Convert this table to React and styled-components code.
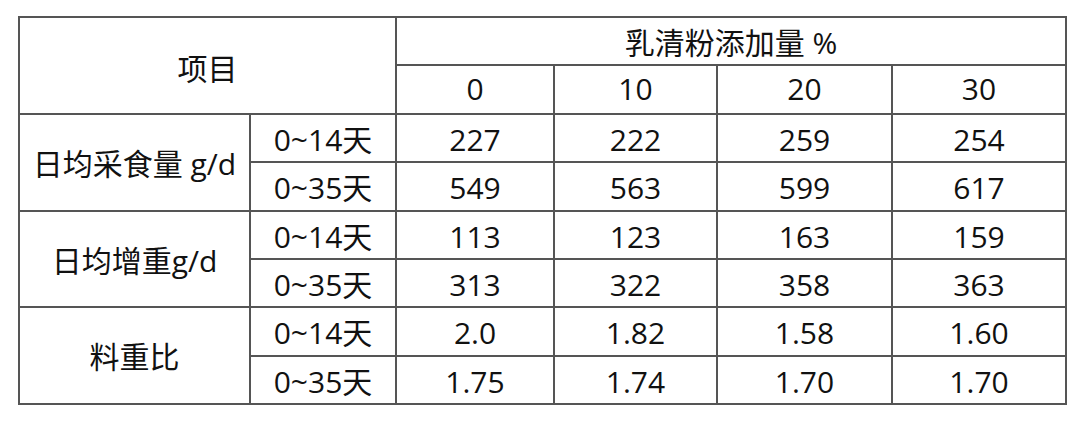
import React from 'react';
import styled, { createGlobalStyle } from 'styled-components';

const GlobalStyle = createGlobalStyle`
  body {
    margin: 0;
    background: #fff;
    font-family: "Open Sans", "Noto Sans CJK SC", sans-serif;
  }
`;

const columns = [231, 146, 158, 163, 175, 174];
const doses = ['0', '10', '20', '30'];

const groups = [
  {
    label: '日均采食量 g/d',
    rows: [
      { period: '0~14天', values: ['227', '222', '259', '254'] },
      { period: '0~35天', values: ['549', '563', '599', '617'] },
    ],
  },
  {
    label: '日均增重g/d',
    rows: [
      { period: '0~14天', values: ['113', '123', '163', '159'] },
      { period: '0~35天', values: ['313', '322', '358', '363'] },
    ],
  },
  {
    label: '料重比',
    rows: [
      { period: '0~14天', values: ['2.0', '1.82', '1.58', '1.60'] },
      { period: '0~35天', values: ['1.75', '1.74', '1.70', '1.70'] },
    ],
  },
];

const Page = styled.div`
  padding: 16px 0 0 18px;
`;

const Table = styled.table`
  border-collapse: collapse;
  table-layout: fixed;
  width: 1048px;
  color: #111;
  font-size: 30px;
`;

const Col = styled.col`
  width: ${(p) => p.$w}px;
`;

const Row = styled.tr`
  height: 48.4px;
`;

const Cell = styled.td`
  border: 2px solid #555;
  padding: 4px 0 0;
  text-align: center;
  vertical-align: middle;
  line-height: 1.15;
  white-space: nowrap;
`;

const HeadCell = styled(Cell).attrs({ as: 'th' })`
  font-weight: normal;
  padding-top: ${(p) => p.$pad}px;
`;

export default function App() {
  return (
    <Page>
      <GlobalStyle />
      <Table>
        <colgroup>
          {columns.map((w, i) => (
            <Col key={i} $w={w} />
          ))}
        </colgroup>
        <thead>
          <Row>
            <HeadCell rowSpan={2} colSpan={2} $pad={8}>
              项目
            </HeadCell>
            <HeadCell colSpan={4} $pad={4}>乳清粉添加量 %</HeadCell>
          </Row>
          <Row>
            {doses.map((d) => (
              <HeadCell key={d} $pad={0}>{d}</HeadCell>
            ))}
          </Row>
        </thead>
        <tbody>
          {groups.map((g) =>
            g.rows.map((r, i) => (
              <Row key={g.label + r.period}>
                {i === 0 && (
                  <Cell rowSpan={2}>{g.label}</Cell>
                )}
                <Cell>{r.period}</Cell>
                {r.values.map((v, j) => (
                  <Cell key={j}>{v}</Cell>
                ))}
              </Row>
            ))
          )}
        </tbody>
      </Table>
    </Page>
  );
}
